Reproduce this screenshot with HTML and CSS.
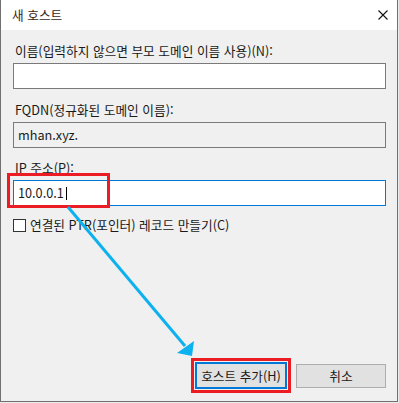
FILE: index.html
```html
<!DOCTYPE html>
<html lang="ko">
<head>
<meta charset="utf-8">
<link rel="stylesheet" href="styles.css">
</head>
<body>
<div class="window">
  <div class="titlebar">
    <span class="title">새 호스트</span>
    <svg class="close" width="10" height="10" viewBox="0 0 10 10"><path d="M0.5 0.5L9.5 9.5M9.5 0.5L0.5 9.5" stroke="#111" stroke-width="1.1" fill="none"/></svg>
  </div>
  <div class="content">
    <div class="label l1">이름(입력하지 않으면 부모 도메인 이름 사용)(N):</div>
    <div class="field"></div>
    <div class="label l2">FQDN(정규화된 도메인 이름):</div>
    <div class="field readonly">mhan.xyz.</div>
    <div class="label l3">IP 주소(P):</div>
    <div class="ipwrap">
      <div class="field focused">10.0.0.1<span class="caret"></span></div>
      <div class="mark"></div>
    </div>
    <label class="check"><span class="box"></span><span>연결된 PTR(포인터) 레코드 만들기(C)</span></label>
  </div>
  <div class="footer">
    <span class="hl"><button class="btn default">호스트 추가(H)</button></span>
    <button class="btn cancel">취소</button>
  </div>
  <svg class="arrow" width="398" height="402" viewBox="0 0 398 402">
    <line x1="67" y1="207" x2="184" y2="346" stroke="#0db1ef" stroke-width="3"/>
    <polygon points="176,353 193,341 191,356" fill="#0db1ef"/>
  </svg>
</div>
</body>
</html>
```

FILE: styles.css
```css
html, body {
  margin: 0;
  padding: 0;
  background: #ececec;
}
body {
  font-family: "Noto Sans CJK KR", "Noto Sans", sans-serif;
  font-size: 12.7px;
  color: #1a1a1a;
}
.window {
  position: relative;
  width: 398px;
  height: 402px;
  box-sizing: border-box;
  border: 1px solid #707070;
  border-top: none;
  background: #f0f0f0;
  display: flex;
  flex-direction: column;
}
.titlebar {
  height: 30px;
  background: #fff;
  display: flex;
  align-items: center;
  justify-content: space-between;
  padding: 0 9px 0 11px;
}
.title {
  color: #3a1f1a;
  line-height: 16px;
}
.content {
  padding: 13px 11px 0 12px;
  display: flex;
  flex-direction: column;
}
.label {
  line-height: 16px;
  height: 16px;
  margin-bottom: 4px;
  padding-left: 2px;
  white-space: nowrap;
}
.field {
  height: 26px;
  box-sizing: border-box;
  border: 1px solid #7a7a7a;
  background: #fff;
  margin-bottom: 13px;
  padding: 0 4px;
  line-height: 24px;
}
.field.readonly {
  background: #f0f0f0;
  margin-bottom: 12px;
}
.ipwrap {
  position: relative;
}
.field.focused {
  border-color: #0078d7;
  margin-bottom: 11px;
  display: flex;
  align-items: center;
}
.caret {
  display: inline-block;
  width: 1px;
  height: 13px;
  background: #000;
  margin-left: 2px;
}
.mark {
  position: absolute;
  left: -6px;
  top: -7px;
  width: 103px;
  height: 35px;
  box-sizing: border-box;
  border: 3px solid #ec1c24;
}
.check {
  display: flex;
  align-items: center;
  gap: 4px;
  line-height: 16px;
}
.box {
  width: 13px;
  height: 13px;
  box-sizing: border-box;
  border: 1px solid #333;
  background: #fff;
}
.footer {
  margin-top: auto;
  display: flex;
  justify-content: flex-end;
  align-items: center;
  gap: 5px;
  padding: 0 11px 8px 0;
}
.hl {
  display: flex;
  border: 3px solid #ec1c24;
  padding: 1px;
}
.btn {
  font-family: inherit;
  font-size: 12.7px;
  color: #1a1a1a;
  margin: 0;
  padding: 0;
  box-sizing: border-box;
  background: #e1e1e1;
}
.btn.default {
  width: 92px;
  height: 27px;
  border: 2px solid #0078d7;
}
.btn.cancel {
  width: 90px;
  height: 24px;
  border: 1px solid #adadad;
}
.arrow {
  position: absolute;
  left: 0;
  top: 0;
  pointer-events: none;
}
```
